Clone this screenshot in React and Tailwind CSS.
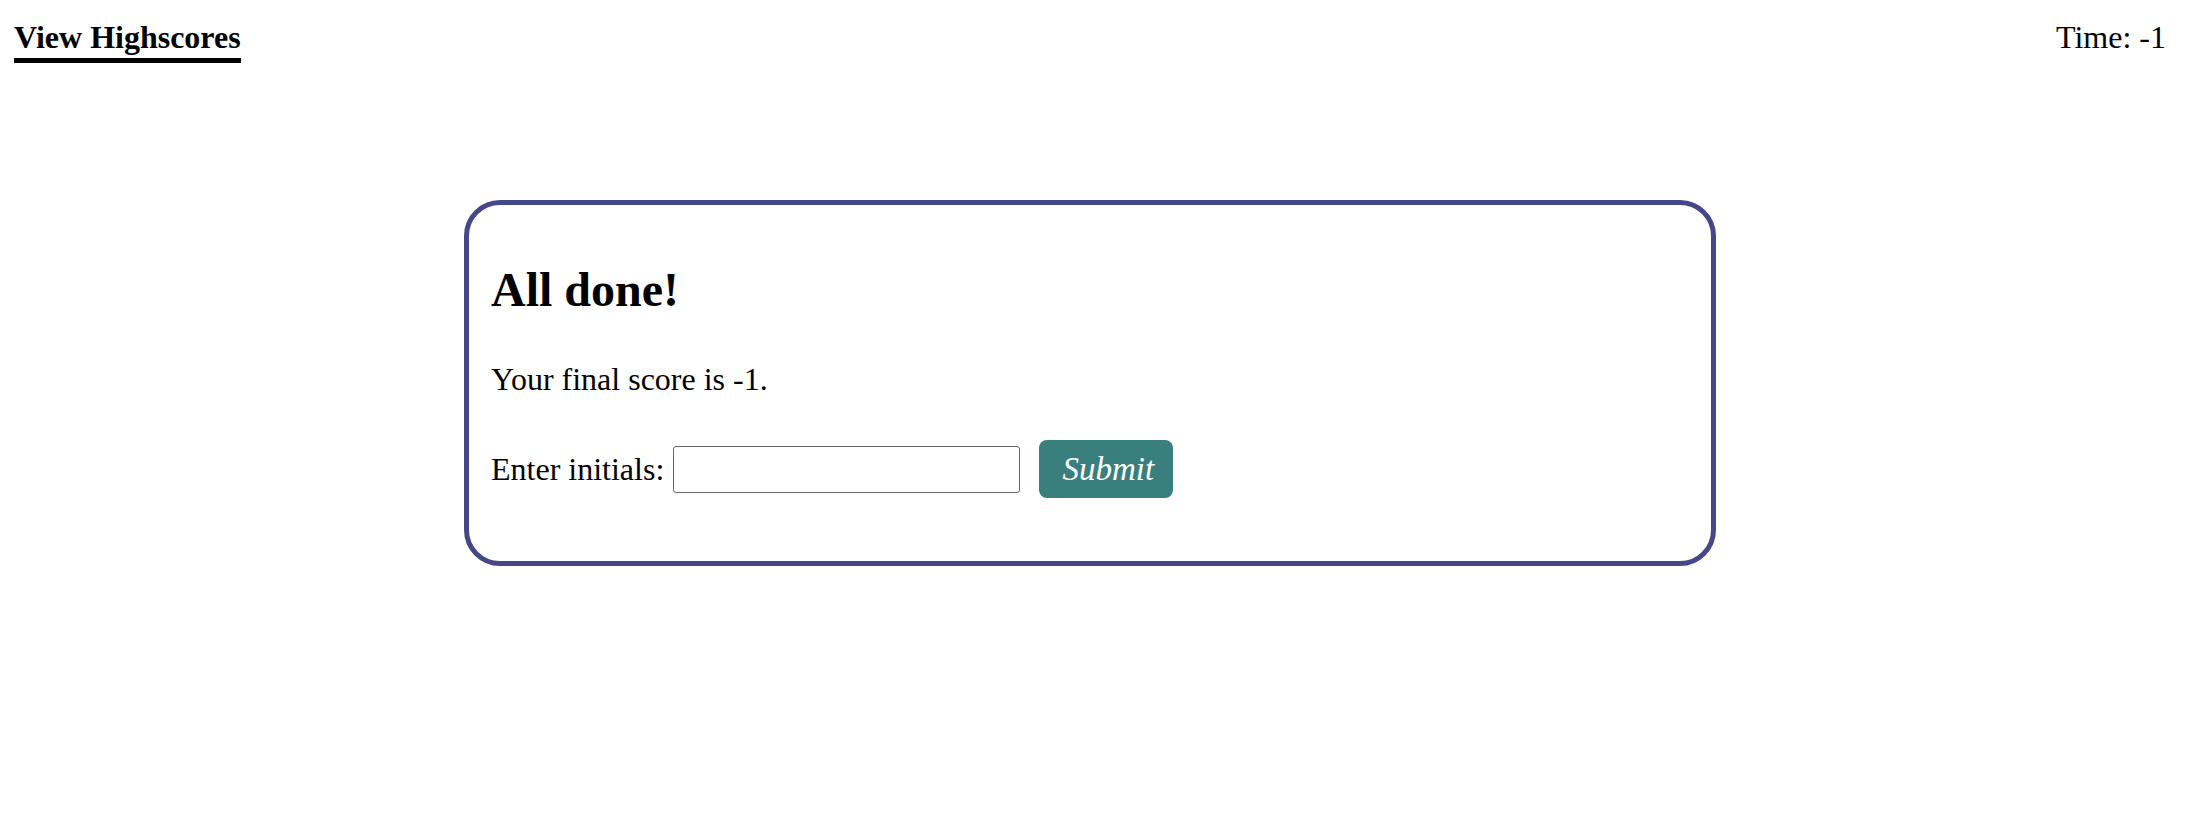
import { useState } from "react";

const serif = "font-['Liberation_Serif','Times_New_Roman',serif]";

const App = () => {
  const [initials, setInitials] = useState("");

  return (
    <div className={`min-h-screen w-full bg-white text-black ${serif}`}>
      {/* Header */}
      <header className="flex items-start justify-between pl-[14px] pr-[20px] pt-[19px]">
        <a
          href="#"
          className="block border-b-[5px] border-black pb-[3px] text-[32px] font-bold leading-[36px] text-black no-underline"
        >
          View Highscores
        </a>
        <div className="text-[32px] leading-[36px]">Time: -1</div>
      </header>

      {/* Result card */}
      <main className="mt-[137px] flex justify-center pr-[6px]">
        <section className="w-[1252px] rounded-[36px] border-[5px] border-[#464788] pl-[22px] pr-[22px] pt-[57px] pb-[63px]">
          <div className="flex flex-col gap-[43px]">
            <h1 className="text-[48px] font-bold leading-[56px]">All done!</h1>
            <p className="text-[32px] leading-[36px]">Your final score is -1.</p>
            <div className="flex items-center">
              <label htmlFor="initials" className="text-[32px] leading-[36px]">
                Enter initials:
              </label>
              <input
                id="initials"
                type="text"
                value={initials}
                onChange={(e) => setInitials(e.target.value)}
                className="ml-[9px] h-[47px] w-[347px] rounded-[3px] border-[1.5px] border-[#666666] bg-white px-2 text-[24px] outline-none"
              />
              <button
                type="button"
                className="ml-[19px] flex h-[58px] w-[134px] items-center justify-center rounded-[8px] bg-[#397f7e] pl-[4px] text-[33px] italic leading-none text-white"
              >
                Submit
              </button>
            </div>
          </div>
        </section>
      </main>
    </div>
  );
};

export default App;
